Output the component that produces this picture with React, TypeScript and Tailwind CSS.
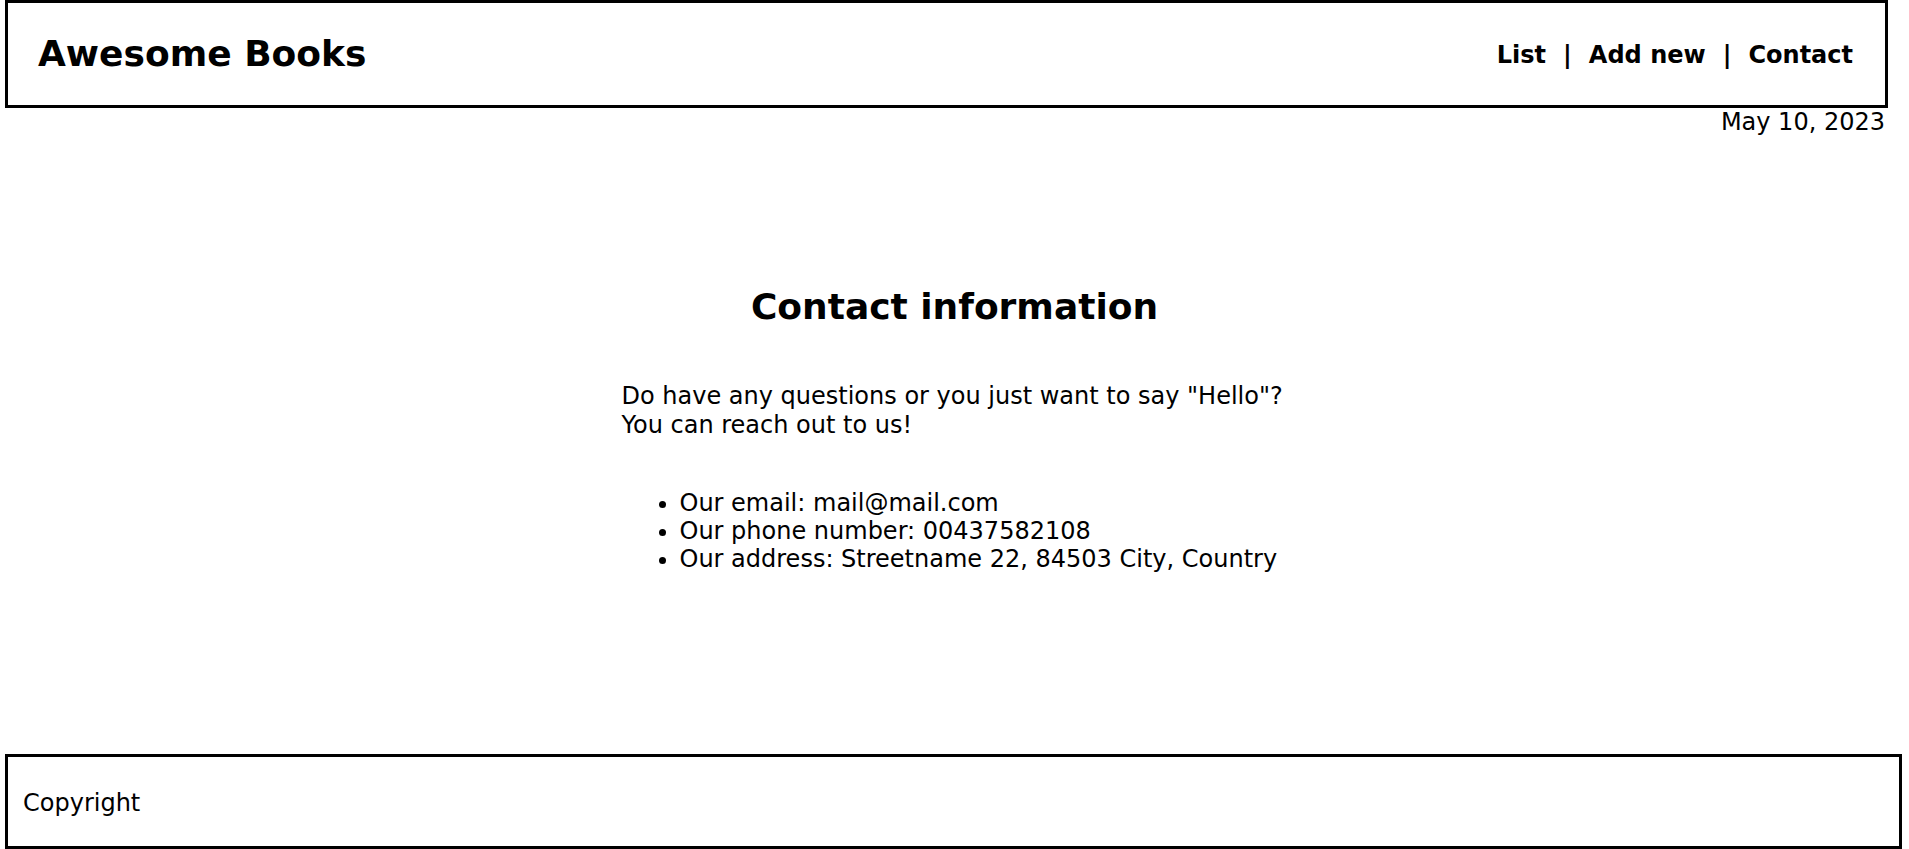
const navItems = ["List", "Add new", "Contact"];

const contacts = [
  "Our email: mail@mail.com",
  "Our phone number: 00437582108",
  "Our address: Streetname 22, 84503 City, Country",
];

export default function App() {
  return (
    <div className="flex min-h-screen flex-col bg-white font-['DejaVu_Sans',Verdana,sans-serif] text-black">
      <header className="ml-[5px] flex h-[108px] w-[1883px] items-center justify-between border-[3px] border-black pl-[30px] pr-[32px]">
        <h1 className="text-[36px] font-bold">Awesome Books</h1>
        <nav className="flex items-center gap-[17px] pt-[2px] text-[24px] font-bold">
          {navItems.map((item, i) => (
            <div key={item} className="flex items-center gap-[17px]">
              {i > 0 && <span>|</span>}
              <a href="#">{item}</a>
            </div>
          ))}
        </nav>
      </header>

      <div className="ml-[5px] w-[1880px] text-right text-[24px] leading-[28px]">May 10, 2023</div>

      <main className="flex-1">
        <section className="mx-auto mt-[150px] w-[666px]">
          <h2 className="text-center text-[36px] font-bold leading-[42px]">Contact information</h2>
          <p className="mt-[54px] text-[24px] leading-[29px]">
            Do have any questions or you just want to say "Hello"?
            <br />
            You can reach out to us!
          </p>
          <ul className="mt-[49px] list-disc pl-[58px] text-[24px] leading-[28px]">
            {contacts.map((c) => (
              <li key={c}>{c}</li>
            ))}
          </ul>
        </section>
      </main>

      <footer className="ml-[5px] flex h-[95px] w-[1897px] items-center border-[3px] border-black pl-[15px] pt-[3px] text-[24px]">
        Copyright
      </footer>
    </div>
  );
}
